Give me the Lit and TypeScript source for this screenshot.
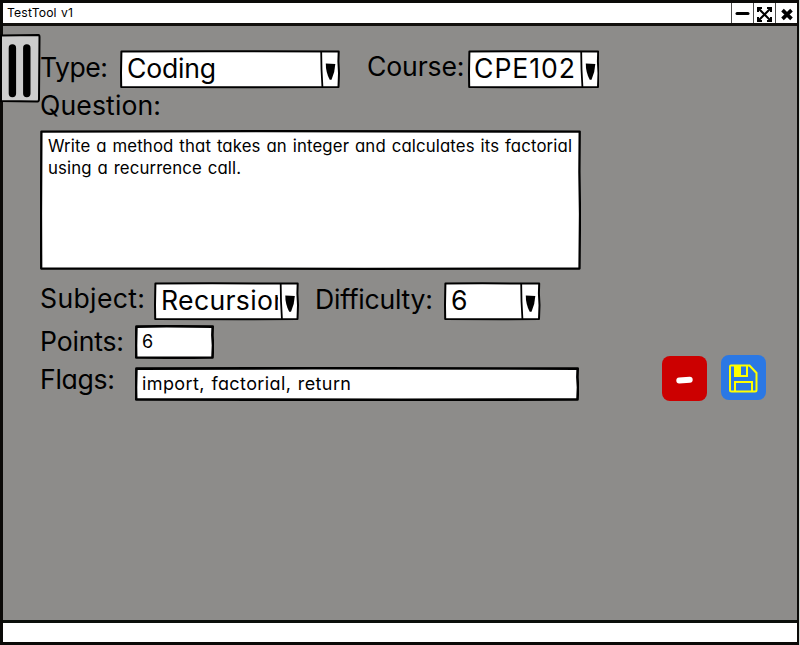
import { LitElement, html, svg, css, nothing } from "lit";
import { customElement, property } from "lit/decorators.js";

/** A line of text set to a fixed measure, with its baseline at a given height. */
@customElement("sketch-text")
export class SketchText extends LitElement {
  @property() text = "";
  @property({ type: Number }) size = 26.6;
  @property({ type: Number }) measure = 0;
  @property({ type: Number }) base = 26;

  static styles = css`
    :host { display: block; flex: none; }
    svg { display: block; overflow: visible; }
    text {
      font-family: Inter, "Open Sans", sans-serif;
      font-weight: 400;
      font-feature-settings: "cv11", "calt" 0;
      word-spacing: 0.06em;
      fill: #000;
    }
  `;

  render() {
    return html`<svg width=${this.measure} height=${this.base + 4}>
      <text x="0" y=${this.base} font-size=${this.size} textLength=${this.measure} lengthAdjust="spacing">${this.text}</text>
    </svg>`;
  }
}

/** White field with a hand-drawn outline; a divider makes it a combo box. */
@customElement("sketch-box")
export class SketchBox extends LitElement {
  @property({ type: Number }) w = 100;
  @property({ type: Number }) h = 38;
  @property({ type: Number }) weight = 2;
  @property({ type: Number }) divider = 0;

  static styles = css`
    :host { display: block; flex: none; }
    .box { position: relative; }
    .outline { position: absolute; inset: 0; display: block; }
    .content { position: relative; overflow: hidden; height: 100%; box-sizing: border-box; padding-left: 6.5px; }
    .line { fill: none; stroke: #000; stroke-linejoin: round; stroke-linecap: round; }
    .paper { fill: #fff; }
  `;

  render() {
    const { w, h, divider: d } = this;
    const frame = `M1.4 1.6 L${w * 0.4} 1.2 L${w - 1.3} 1.6 L${w - 1.6} ${h * 0.3} L${w - 1} ${h * 0.6} L${w - 1.5} ${h - 1.5} L${w * 0.6} ${h - 1.2} L1.2 ${h - 1.5} L1 ${h * 0.6} Z`;
    return html`
      <div class="box" style="width:${w}px;height:${h}px">
        <svg class="outline" width=${w} height=${h}>
          <path class="paper" d=${frame}></path>
          <path class="line" stroke-width=${this.weight} d=${frame}></path>
          ${d
            ? svg`<path class="line" stroke-width="1.8" d="M${d - 0.3} 2 L${d} ${h / 2} L${d + 0.9} ${h - 2}"></path>
              <path d="M${d + 4.3} 13.4 L${d + 13.8} 14 Q${d + 13.5} 22 ${d + 10} 29.8 L${d + 8.2} 29.8 Q${d + 4.2} 22 ${d + 4.3} 13.4Z"></path>`
            : nothing}
        </svg>
        <div class="content" style="width:${d ? d - 3 : w - 2}px"><slot></slot></div>
      </div>
    `;
  }
}

@customElement("app-root")
export class AppRoot extends LitElement {
  static styles = css`
    :host { display: block; width: 800px; height: 645px; background: #d0d4cf; overflow: hidden; }
    .window {
      box-sizing: border-box; width: 799px; height: 645px;
      border: 2px solid #0b0a08; border-bottom-width: 3px; border-left-width: 3px; border-top-width: 3px;
      display: flex; flex-direction: column; background: #fff;
    }
    .titlebar { flex: none; height: 20px; display: flex; justify-content: space-between; padding-left: 4px; }
    .controls { display: flex; }
    .control { width: 21px; height: 20px; border-left: 1.5px solid #4a4a4a; display: block; }
    .body { flex: none; height: 594px; border-top: 3px solid #12100d; border-bottom: 3px solid #0b0f0b; background: #8d8c8a; display: flex; }
    .rail { width: 37px; flex: none; padding-top: 8px; }
    .toggle { display: block; margin-left: -3px; position: relative; }
    .form { width: 545px; flex: none; padding-top: 24px; display: flex; flex-direction: column; }
    .row { display: flex; align-items: flex-start; flex: none; }
    .tall { height: 39px; }
    .question { height: 41px; }
    .label { flex: none; }
    .type { width: 80px; }
    .course { width: 101px; margin-left: 26.5px; }
    .subject { width: 114px; }
    .difficulty { width: 129px; margin-left: 16px; }
    .short { width: 95px; }
    .area { margin-bottom: 12px; }
    .points { height: 42px; padding-top: 4px; box-sizing: border-box; }
    .paragraph { display: flex; flex-direction: column; padding-left: 1.5px; }
    .second { margin-top: -3px; }
    .actions { display: flex; gap: 14px; padding: 329px 0 0 77px; }
    .button { width: 45px; height: 45px; border-radius: 8px; flex: none; }
    .remove { background: #cc0000; margin-top: 1px; }
    .save { background: #2b78e4; }
    .button svg { display: block; }
  `;

  render() {
    return html`
      <div class="window">
        <div class="titlebar">
          <sketch-text text="TestTool v1" size="12.2" measure="66" base="14"></sketch-text>
          <div class="controls">
            <svg class="control" viewBox="0 0 21 20"><path d="M5 10.5H16" stroke="#000" stroke-width="3" stroke-linecap="round"></path></svg>
            <svg class="control" viewBox="0 0 21 20" fill="none" stroke="#000" stroke-width="2">
              <path d="M5 6L16 17M16 6L5 17"></path>
              <path d="M4 9V5H8M13 5H17V9M17 14V18H13M8 18H4V14"></path>
            </svg>
            <svg class="control" viewBox="0 0 21 20"><path d="M6.5 7.2L15.5 15.8M15.5 7.2L6.5 15.8" stroke="#000" stroke-width="3.7"></path></svg>
          </div>
        </div>
        <div class="body">
          <div class="rail">
            <svg class="toggle" width="41" height="69">
              <path d="M1 1.4L38.5 1Q39.5 1 39.5 3L39 65Q39 67.5 37.5 67.6L1 67Z" fill="#ccc" stroke="#000" stroke-width="2"></path>
              <path d="M12.4 14V59.5M26.8 14V59.5" stroke="#000" stroke-width="7.4" stroke-linecap="round"></path>
            </svg>
          </div>
          <div class="form">
            <div class="row tall">
              <sketch-text class="label type" text="Type:" measure="68" base="26.5"></sketch-text>
              <sketch-box w="220" h="38.5" divider="201.5"><sketch-text text="Coding" measure="89" base="28"></sketch-text></sketch-box>
              <sketch-text class="label course" text="Course:" measure="97.5" base="26"></sketch-text>
              <sketch-box w="131.5" h="38.5" divider="113.5"><sketch-text text="CPE102" measure="101" base="28"></sketch-text></sketch-box>
            </div>
            <div class="question"><sketch-text text="Question:" measure="121" base="26"></sketch-text></div>
            <sketch-box class="area" w="541" h="140" weight="2.3">
              <div class="paragraph">
                <sketch-text text="Write a method that takes an integer and calculates its factorial" size="16.8" measure="524" base="22"></sketch-text>
                <sketch-text class="second" text="using a recurrence call." size="16.8" measure="193" base="21"></sketch-text>
              </div>
            </sketch-box>
            <div class="row tall">
              <sketch-text class="label subject" text="Subject:" measure="105" base="26"></sketch-text>
              <sketch-box w="145" h="38.5" divider="127"><sketch-text text="Recursion" measure="128" base="28"></sketch-text></sketch-box>
              <sketch-text class="label difficulty" text="Difficulty:" measure="118" base="27"></sketch-text>
              <sketch-box w="96.5" h="38.5" divider="77.5"><sketch-text text="6" measure="16" base="28"></sketch-text></sketch-box>
            </div>
            <div class="row points">
              <sketch-text class="label short" text="Points:" measure="84" base="25.5"></sketch-text>
              <sketch-box w="79" h="34" weight="2.6"><sketch-text text="6" size="18" measure="12" base="22.5"></sketch-text></sketch-box>
            </div>
            <div class="row points">
              <sketch-text class="label short" text="Flags:" measure="75" base="22"></sketch-text>
              <sketch-box w="444" h="34" weight="2.6"><sketch-text text="import, factorial, return" size="18" measure="209" base="23"></sketch-text></sketch-box>
            </div>
          </div>
          <div class="actions">
            <div class="button remove">
              <svg width="45" height="45"><path d="M17.3 24.6L27.7 23.8" stroke="#fff" stroke-width="6" stroke-linecap="round"></path></svg>
            </div>
            <div class="button save">
              <svg width="45" height="45" fill="none" stroke="#ff0" stroke-width="2">
                <path d="M10 10.5H28.5L35.5 18V35Q35.5 36.5 34 36.5H10.5Q9 36.5 9 35V11.5Q9 10.5 10 10.5Z"></path>
                <path d="M14 11V21H26V11M14 36V27H31V36"></path>
                <path d="M14 11H20V21H14Z" fill="#ff0" stroke="none"></path>
              </svg>
            </div>
          </div>
        </div>
      </div>
    `;
  }
}
